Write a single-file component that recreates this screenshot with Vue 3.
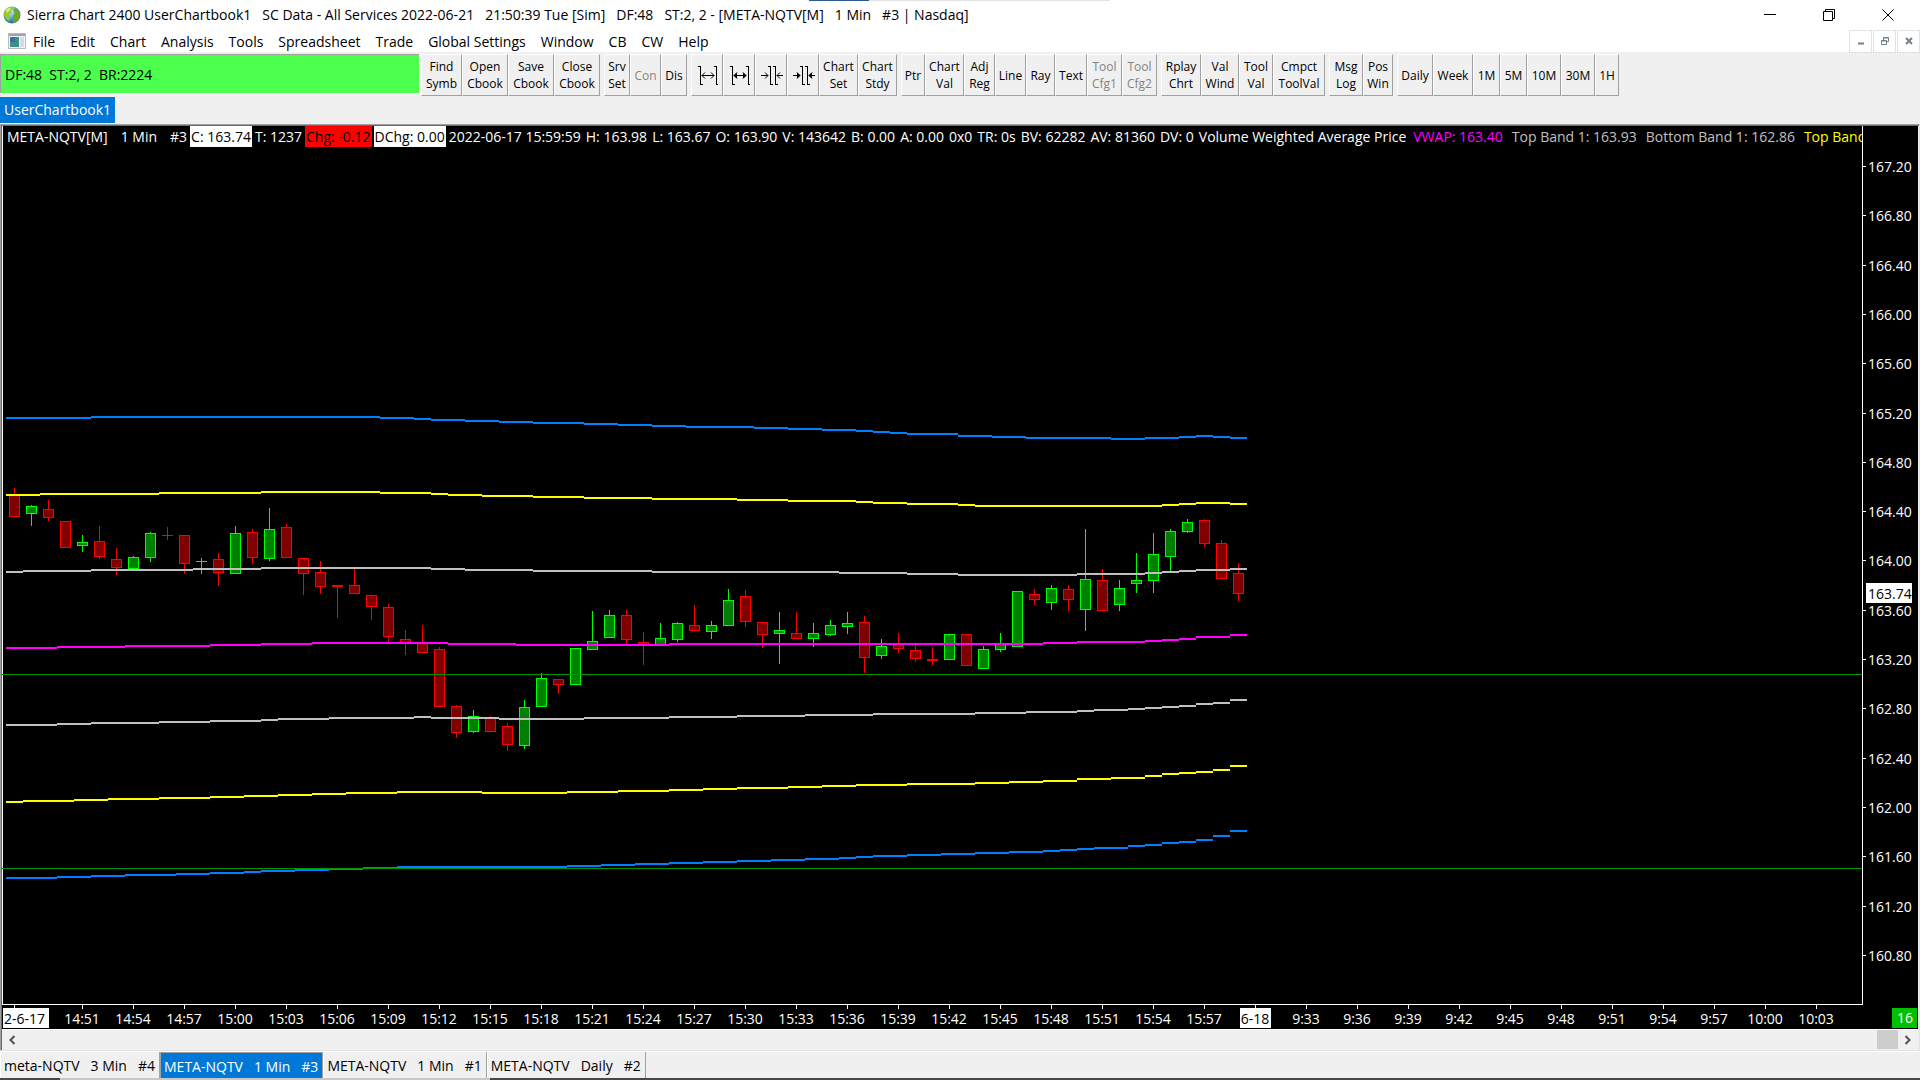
<template>
  <div class="app-window">
    <header class="title-bar">
      <svg class="app-icon" width="18" height="18" viewBox="0 0 18 18">
        <defs>
          <radialGradient id="globe" cx="0.4" cy="0.3" r="0.8">
            <stop offset="0" stop-color="#d8f4ff" />
            <stop offset="0.5" stop-color="#4fa3d8" />
            <stop offset="1" stop-color="#1b4f8c" />
          </radialGradient>
        </defs>
        <circle cx="9" cy="9" r="8.5" fill="url(#globe)" />
        <path d="M2 4 Q5 0.5 9 0.8 L10 3 L8 5 L9 7 L6 9 L7 12 L6 15 Q1 12 0.8 8 Z" fill="#9bc92e" />
        <path d="M11 2 L15 4 Q18 8 16.5 12 Q14 16.5 10 17.2 L11 13 L9.5 10 L12 7 L10.5 5 Z" fill="#6fa820" />
        <path d="M3 4 Q5 1.8 8 1.8 L7 4 L4 7 Z" fill="#e3ee6a" />
      </svg>
      <h1>
        <span v-for="part in windowTitle" :key="part">{{ part }}</span>
      </h1>
      <div class="window-buttons">
        <button aria-label="Minimize">
          <svg width="12" height="12"><path d="M0 5.5H12" /></svg>
        </button>
        <button aria-label="Restore">
          <svg width="12" height="12"><path d="M0.5 2.5H9.5V11.5H0.5Z M2.5 2.5V0.5H11.5V9.5H9.5" /></svg>
        </button>
        <button aria-label="Close">
          <svg width="12" height="12"><path d="M0.5 0.5L11.5 11.5M11.5 0.5L0.5 11.5" /></svg>
        </button>
      </div>
    </header>

    <nav class="menu-bar">
      <svg class="doc-icon" width="18" height="16" viewBox="0 0 18 16">
        <rect x="0.5" y="0.5" width="17" height="15" fill="#f4f4f4" stroke="#b8bcc0" />
        <rect x="1" y="1" width="16" height="2" fill="#9aa4ae" />
        <rect x="2" y="4" width="9" height="10" fill="#3f8f86" />
        <rect x="2" y="4" width="5" height="5" fill="#3c6fa0" />
        <rect x="12" y="4" width="4" height="10" fill="#d4dade" />
      </svg>
      <button v-for="item in menuItems" :key="item" class="menu-item">{{ item }}</button>
      <div class="mdi-buttons">
        <button aria-label="Minimize chart">
          <svg width="10" height="10"><path d="M2 7.5H8" stroke-width="2" /></svg>
        </button>
        <button aria-label="Restore chart">
          <svg width="10" height="10"><path d="M1.5 4.5H6.5V8.5H1.5Z M1 5H7 M3.5 4V1.5H8.5V5.5H7 M3 2H9" /></svg>
        </button>
        <button aria-label="Close chart">
          <svg width="10" height="10"><path d="M2 2L8 8M8 2L2 8" stroke-width="2" /></svg>
        </button>
      </div>
    </nav>

    <div class="toolbar">
      <div class="status">DF:48&nbsp; ST:2, 2&nbsp; BR:2224</div>
      <div v-for="(group, g) in toolGroups" :key="g" class="tool-group">
        <button
          v-for="tool in group"
          :key="tool.label"
          class="tool"
          :disabled="tool.off"
          :aria-label="tool.label"
          :style="{ width: tool.w + 'px' }"
        >
          <svg v-if="tool.icon" width="20" height="20" viewBox="-2 -1 20 20">
            <path :d="tool.icon" />
            <path :d="tool.heads" :class="{ solid: tool.solid }" />
          </svg>
          <template v-else>{{ tool.label }}</template>
        </button>
      </div>
    </div>

    <div class="book-tabs">
      <button class="book-tab">UserChartbook1</button>
    </div>

    <main class="chart-frame">
      <div class="plot">
        <svg class="canvas" shape-rendering="crispEdges">
          <rect width="1" height="100%" fill="#fff" />
          <g transform="translate(-2 274)">
            <g v-for="(c, i) in candles" :key="i" :class="c[4] ? 'up' : 'down'">
              <rect class="wick" :x="barX(i)" :y="c[0]" width="1" :height="c[3] - c[0]" />
              <rect class="edge" :x="barX(i) - 5" :y="c[1]" width="11" :height="c[2] - c[1]" />
              <rect
                v-if="c[2] - c[1] > 2"
                class="body"
                :x="barX(i) - 4"
                :y="c[1] + 1"
                width="9"
                :height="c[2] - c[1] - 2"
              />
            </g>
            <path
              v-for="band in bands"
              :key="band.name"
              :d="bandPath(band.steps)"
              :stroke="band.color"
              stroke-width="2"
              fill="none"
            />
            <rect v-for="y in [274, 468]" :key="y" x="2" :y="y" width="100%" height="1" fill="#009600" />
          </g>
        </svg>
        <div class="readout">
          <div class="fields name">
            <span v-for="text in chartName" :key="text">{{ text }}</span>
          </div>
          <span class="box">C: 163.74</span>
          <span class="plain">T: 1237</span>
          <span class="box loss">Chg: -0.12</span>
          <span class="box">DChg: 0.00</span>
          <div class="fields">
            <span v-for="text in barFields" :key="text">{{ text }}</span>
          </div>
          <span v-for="study in studies" :key="study.text" class="study" :class="study.kind">{{ study.text }}</span>
        </div>
      </div>

      <svg class="price-axis">
        <g v-for="p in prices" :key="p.label">
          <rect x="0" :y="p.y" width="3" height="1" fill="#fff" />
          <text x="5" :y="p.y + 6">{{ p.label }}</text>
        </g>
        <rect x="3" y="457" width="46" height="20" fill="#fff" />
        <text class="dark" x="5" y="473">163.74</text>
      </svg>

      <div class="time-row">
        <svg class="time-axis">
          <g transform="translate(-2 0)">
            <rect x="14" y="0" width="1" height="4" fill="#fff" />
            <rect x="3" y="3" width="46" height="20" fill="#fff" />
            <text class="dark" x="4" y="19">2-6-17</text>
            <g v-for="(t, i) in times" :key="t">
              <rect :x="82 + i * 51" y="0" width="1" height="4" fill="#fff" />
              <rect v-if="t === '6-18'" :x="67 + i * 51" y="3" width="31" height="20" fill="#fff" />
              <text class="mid" :class="{ dark: t === '6-18' }" :x="82 + i * 51" y="19">{{ t }}</text>
            </g>
          </g>
        </svg>
        <span class="countdown">16</span>
      </div>

      <div class="scrollbar">
        <button aria-label="Scroll left">
          <svg width="8" height="10"><path d="M6.5 1L2.5 5L6.5 9" /></svg>
        </button>
        <div class="track"><div class="thumb"></div></div>
        <button aria-label="Scroll right">
          <svg width="8" height="10"><path d="M1.5 1L5.5 5L1.5 9" /></svg>
        </button>
      </div>
    </main>

    <footer class="chart-tabs">
      <button v-for="(tab, i) in chartTabs" :key="i" :class="{ active: i === activeTab }" @click="activeTab = i">
        <span v-for="part in tab" :key="part">{{ part }}</span>
      </button>
    </footer>
    <div class="window-edge"></div>
  </div>
</template>

<script setup>
import { ref } from 'vue'

const windowTitle = [
  'Sierra Chart 2400 UserChartbook1',
  'SC Data - All Services 2022-06-21',
  '21:50:39 Tue [Sim]',
  'DF:48',
  'ST:2, 2 - [META-NQTV[M]',
  '1 Min',
  '#3 | Nasdaq]',
]

const menuItems = [
  'File', 'Edit', 'Chart', 'Analysis', 'Tools', 'Spreadsheet', 'Trade',
  'Global Settings', 'Window', 'CB', 'CW', 'Help',
]

const outerBars = 'M1.5 0V19M-1 0.5H1M1 18.5H4M17.5 0V19M15 0.5H17M17 18.5H19'
const innerBars = 'M7.5 0V19M5 0.5H7M7 18.5H10M12.5 0V19M10 0.5H12M12 18.5H15'
const headsOut = 'M3 9.5H15M6 6.5L3 9.5L6 12.5M12 6.5L15 9.5L12 12.5'
const headsIn = 'M-2 9.5H5M2 6.5L5 9.5L2 12.5M20 9.5H14M17 6.5L14 9.5L17 12.5'

const toolGroups = [
  [
    { label: 'Find Symb', w: 41 },
    { label: 'Open Cbook', w: 46 },
    { label: 'Save Cbook', w: 46 },
    { label: 'Close Cbook', w: 46 },
  ],
  [
    { label: 'Srv Set', w: 26 },
    { label: 'Con', w: 31, off: true },
    { label: 'Dis', w: 26 },
  ],
  [
    { label: 'Increase spacing', w: 32, icon: outerBars, heads: headsOut },
    { label: 'Increase spacing more', w: 32, icon: outerBars, heads: headsOut, solid: true },
    { label: 'Decrease spacing', w: 32, icon: innerBars, heads: headsIn },
    { label: 'Decrease spacing more', w: 32, icon: innerBars, heads: headsIn, solid: true },
    { label: 'Chart Set', w: 39 },
    { label: 'Chart Stdy', w: 39 },
  ],
  [
    { label: 'Ptr', w: 24 },
    { label: 'Chart Val', w: 39 },
    { label: 'Adj Reg', w: 31 },
    { label: 'Line', w: 31 },
    { label: 'Ray', w: 29 },
    { label: 'Text', w: 32 },
    { label: 'Tool Cfg1', w: 35, off: true },
    { label: 'Tool Cfg2', w: 35, off: true },
  ],
  [
    { label: 'Rplay Chrt', w: 40 },
    { label: 'Val Wind', w: 38 },
    { label: 'Tool Val', w: 34 },
    { label: 'Cmpct ToolVal', w: 52 },
  ],
  [
    { label: 'Msg Log', w: 34 },
    { label: 'Pos Win', w: 30 },
  ],
  [
    { label: 'Daily', w: 36 },
    { label: 'Week', w: 40 },
    { label: '1M', w: 27 },
    { label: '5M', w: 27 },
    { label: '10M', w: 34 },
    { label: '30M', w: 34 },
    { label: '1H', w: 24 },
  ],
]

const chartName = ['META-NQTV[M]', '1 Min', '#3']
const barFields = [
  '2022-06-17 15:59:59', 'H: 163.98', 'L: 163.67', 'O: 163.90', 'V: 143642', 'B: 0.00', 'A: 0.00', '0x0',
  'TR: 0s', 'BV: 62282', 'AV: 81360', 'DV: 0', 'Volume Weighted Average Price',
]
const studies = [
  { text: 'VWAP: 163.40', kind: 'vwap' },
  { text: 'Top Band 1: 163.93', kind: 'band1' },
  { text: 'Bottom Band 1: 162.86', kind: 'band1' },
  { text: 'Top Band', kind: 'band2' },
]

// [high, body top, body bottom, low, up]
const candles = [
  [88, 95, 117, 117, 0], [105, 106, 114, 126, 1], [100, 109, 118, 121, 0], [121, 121, 148, 148, 0],
  [135, 142, 146, 152, 1], [126, 141, 157, 159, 0], [148, 159, 168, 175, 0], [156, 157, 169, 169, 1],
  [132, 133, 158, 162, 1], [127, 135, 136, 140, 0], [135, 135, 164, 174, 0], [158, 161, 162, 174, 1],
  [153, 159, 173, 186, 0], [126, 133, 174, 174, 1], [129, 132, 158, 163, 0], [108, 129, 159, 161, 1],
  [124, 127, 158, 158, 0], [158, 158, 174, 195, 0], [161, 172, 187, 194, 0], [185, 185, 187, 218, 0],
  [169, 185, 194, 194, 0], [195, 195, 207, 220, 0], [204, 207, 237, 242, 0], [230, 239, 243, 255, 0],
  [225, 243, 253, 253, 0], [247, 249, 307, 307, 0], [305, 306, 333, 338, 0], [310, 316, 332, 333, 1],
  [316, 318, 332, 332, 0], [323, 326, 345, 351, 0], [300, 307, 346, 349, 1], [273, 278, 307, 307, 1],
  [279, 279, 285, 294, 0], [248, 248, 285, 285, 1], [211, 241, 250, 250, 1], [210, 215, 238, 238, 1],
  [210, 215, 240, 244, 0], [232, 242, 245, 265, 0], [223, 238, 245, 245, 1], [222, 223, 240, 242, 1],
  [205, 225, 231, 231, 0], [221, 225, 232, 239, 1], [189, 200, 226, 226, 1], [190, 196, 222, 227, 0],
  [222, 222, 235, 248, 0], [212, 230, 234, 264, 1], [212, 233, 239, 239, 0], [223, 233, 239, 247, 1],
  [220, 225, 235, 236, 1], [212, 223, 227, 234, 1], [216, 222, 258, 273, 0], [239, 246, 256, 259, 1],
  [233, 244, 249, 253, 0], [244, 250, 259, 262, 0], [247, 259, 261, 265, 0], [234, 234, 260, 260, 1],
  [234, 234, 266, 266, 0], [246, 249, 269, 269, 1], [233, 244, 250, 252, 1], [191, 191, 247, 247, 1],
  [189, 194, 200, 205, 0], [185, 188, 203, 210, 1], [185, 189, 200, 211, 0], [129, 179, 210, 231, 1],
  [169, 180, 211, 211, 0], [180, 188, 205, 211, 1], [153, 180, 184, 193, 1], [133, 154, 181, 193, 1],
  [129, 131, 157, 172, 1], [119, 122, 132, 133, 1], [119, 120, 144, 147, 0], [140, 143, 179, 179, 0],
  [163, 173, 194, 201, 0],
]

// steps: [first bar, y]
const bands = [
  {
    name: 'top3',
    color: '#0080ff',
    steps: [
      [0, 18], [5, 17], [22, 18], [24, 19], [25, 20], [27, 21], [29, 22], [31, 23], [34, 24], [36, 25],
      [38, 26], [40, 27], [44, 28], [46, 29], [48, 30], [50, 31], [51, 32], [52, 33], [53, 34], [56, 36],
      [58, 37], [60, 38], [65, 39], [67, 38], [69, 37], [70, 36], [71, 37], [72, 38],
    ],
  },
  {
    name: 'top2',
    color: '#ffff00',
    steps: [
      [0, 95], [2, 94], [9, 93], [15, 92], [22, 93], [25, 94], [26, 95], [28, 96], [31, 97], [34, 98],
      [38, 99], [43, 100], [46, 101], [50, 102], [51, 103], [53, 104], [56, 105], [57, 106], [68, 105],
      [69, 104], [70, 103], [72, 104],
    ],
  },
  {
    name: 'top1',
    color: '#c0c0c0',
    steps: [
      [0, 172], [1, 171], [5, 170], [11, 169], [15, 168], [25, 169], [27, 170], [31, 171], [38, 172],
      [49, 173], [53, 174], [56, 175], [63, 174], [67, 173], [68, 172], [69, 171], [70, 170], [72, 169],
    ],
  },
  {
    name: 'bottom1',
    color: '#c0c0c0',
    steps: [
      [0, 325], [3, 324], [5, 323], [9, 322], [12, 321], [15, 320], [16, 319], [19, 318], [24, 317],
      [25, 318], [29, 319], [34, 318], [39, 317], [43, 316], [47, 315], [51, 314], [57, 313], [60, 312],
      [63, 311], [64, 310], [66, 309], [67, 308], [68, 307], [69, 306], [70, 304], [71, 303], [72, 300],
    ],
  },
  {
    name: 'bottom2',
    color: '#ffff00',
    steps: [
      [0, 402], [1, 401], [4, 400], [6, 399], [9, 398], [12, 397], [14, 396], [16, 395], [18, 394],
      [20, 393], [23, 392], [28, 393], [33, 392], [36, 391], [39, 390], [41, 389], [43, 388], [46, 387],
      [48, 386], [50, 385], [53, 384], [57, 383], [59, 382], [61, 381], [63, 379], [65, 378], [67, 376],
      [68, 374], [69, 373], [70, 372], [71, 370], [72, 366],
    ],
  },
  {
    name: 'bottom3',
    color: '#0080ff',
    steps: [
      [0, 478], [3, 477], [5, 476], [7, 475], [10, 474], [12, 473], [14, 472], [15, 471], [17, 470],
      [19, 469], [21, 468], [23, 467], [33, 466], [35, 465], [37, 464], [39, 463], [41, 462], [43, 461],
      [45, 460], [47, 459], [49, 458], [50, 457], [51, 456], [53, 455], [55, 454], [57, 453], [59, 452],
      [61, 451], [62, 450], [63, 449], [64, 448], [66, 446], [67, 445], [68, 443], [69, 442], [70, 440],
      [71, 436], [72, 431],
    ],
  },
  {
    name: 'vwap',
    color: '#ff00ff',
    steps: [
      [0, 248], [3, 247], [7, 246], [12, 245], [15, 244], [18, 243], [26, 244], [30, 245], [39, 244],
      [61, 243], [63, 242], [67, 241], [68, 240], [69, 239], [70, 237], [72, 235],
    ],
  },
]

const barWidth = 17
const barX = (i) => 14 + i * barWidth

function bandPath(steps) {
  return steps
    .map(([start, y], i) => {
      const end = i + 1 < steps.length ? steps[i + 1][0] : candles.length
      return `M${6 + start * barWidth} ${y}H${6 + end * barWidth}`
    })
    .join('')
}

const prices = Array.from({ length: 17 }, (_, i) => ({
  label: (167.2 - i * 0.4).toFixed(2),
  y: Math.round(40 + i * 49.3),
}))

const clock = (minutes) => `${Math.floor(minutes / 60)}:${String(minutes % 60).padStart(2, '0')}`
const times = [
  ...Array.from({ length: 23 }, (_, i) => clock(14 * 60 + 51 + i * 3)),
  '6-18',
  ...Array.from({ length: 11 }, (_, i) => clock(9 * 60 + 33 + i * 3)),
]

const chartTabs = [
  ['meta-NQTV', '3 Min', '#4'],
  ['META-NQTV', '1 Min', '#3'],
  ['META-NQTV', '1 Min', '#1'],
  ['META-NQTV', 'Daily', '#2'],
]
const activeTab = ref(1)
</script>

<style>
body {
  background: #f0f0f0;
}
</style>

<style scoped>
* {
  box-sizing: border-box;
}

.app-window {
  display: flex;
  flex-direction: column;
  height: 100vh;
  overflow: hidden;
  background: #f0f0f0;
  color: #000;
  font-family: 'Open Sans', 'Noto Sans', sans-serif;
  font-size: 14px;
  line-height: 20px;
}

button {
  margin: 0;
  padding: 0;
  border: 0;
  background: none;
  color: inherit;
  font: inherit;
  white-space: pre;
}

.title-bar {
  position: relative;
  display: flex;
  align-items: center;
  height: 30px;
  padding: 0 3px;
  gap: 6px;
  background: #fff;
}

/* sliver of the window behind */
.title-bar::before {
  content: '';
  position: absolute;
  top: 0;
  left: 809px;
  width: 301px;
  height: 1px;
  background: linear-gradient(90deg, #2b5a8c 60px, #e3e3e3 60px);
}

.title-bar h1 {
  display: flex;
  flex: 1;
  gap: 11px;
  margin: 0;
  font-size: 14px;
  font-weight: 400;
  white-space: pre;
}

.window-buttons {
  display: flex;
}

.window-buttons button {
  display: grid;
  place-items: center;
  width: 59px;
  height: 28px;
}

.window-buttons svg {
  fill: none;
  stroke: #000;
}

.menu-bar {
  display: flex;
  align-items: center;
  height: 22px;
  padding-left: 8px;
  gap: 15px;
  background: #fff;
}

.menu-item {
  padding-top: 1px;
}

.doc-icon {
  margin-right: -8px;
}

.mdi-buttons {
  display: flex;
  gap: 1px;
  margin-left: auto;
}

.mdi-buttons button {
  display: grid;
  place-items: center;
  width: 23px;
  height: 23px;
  border: 1px solid #e2e2e2;
}

.mdi-buttons svg {
  fill: none;
  stroke: #74808e;
}

.toolbar {
  display: flex;
  gap: 4px;
  height: 45px;
  padding-top: 2px;
}

.status {
  width: 419px;
  height: 39px;
  margin-right: -2px;
  padding-left: 4px;
  border-top: 1px solid #a0a0a0;
  border-left: 1px solid #a0a0a0;
  background: #4dff4d;
  line-height: 40px;
}

.tool-group {
  display: flex;
  height: 42px;
}

.tool {
  display: grid;
  place-items: center;
  align-content: center;
  border: 1px solid #a0a0a0;
  border-top-color: #fff;
  border-left-color: #fff;
  font-size: 12px;
  line-height: 17px;
  text-align: center;
  white-space: normal;
}

.tool:disabled {
  color: #838383;
}

.tool svg {
  overflow: visible;
  fill: none;
  stroke: #000;
}

.tool .solid {
  fill: #000;
}

.book-tabs {
  height: 27px;
}

.book-tab {
  height: 26px;
  padding: 0 4px;
  background: #0078d7;
  color: #fff;
}

.chart-frame {
  display: grid;
  flex: 1;
  grid-template-columns: 1fr 55px;
  grid-template-rows: 1fr 24px 21px;
  min-height: 0;
  border: 1px solid #a0a0a0;
  border-right-color: #e3e3e3;
  border-bottom-color: #e3e3e3;
  box-shadow: inset 1px 1px #696969;
  padding: 1px 1px 0 1px;
}

.plot {
  position: relative;
  min-width: 0;
  overflow: hidden;
  border-right: 1px solid #fff;
  border-bottom: 1px solid #fff;
  background: #000;
}

.canvas {
  display: block;
  width: 100%;
  height: 100%;
}

.up .wick,
.up .edge {
  fill: #00ff00;
}

.up .body {
  fill: #008000;
}

.down .wick,
.down .edge {
  fill: #ff0000;
}

.down .body {
  fill: #800000;
}

.readout {
  position: absolute;
  top: 0;
  left: 4px;
  display: flex;
  color: #fff;
  line-height: 21px;
  white-space: pre;
}

.fields {
  display: flex;
  gap: 5px;
  padding: 0 3px 0 1px;
}

.name {
  gap: 13px;
}

.plain {
  padding: 0 3px 0 1px;
}

.box {
  margin-right: 2px;
  padding: 0 1px;
  background: #fff;
  color: #000;
}

.loss {
  background: #ff0000;
}

.study {
  margin-left: 4px;
  padding-right: 5px;
}

.vwap {
  color: #ff00ff;
}

.band1 {
  color: #c0c0c0;
}

.band2 {
  color: #ffff00;
}

.price-axis {
  width: 100%;
  height: 100%;
  background: #000;
}

text {
  fill: #fff;
}

text.dark {
  fill: #000;
}

.mid {
  text-anchor: middle;
}

.time-row {
  display: flex;
  grid-column: 1 / -1;
  align-items: center;
  background: #000;
}

.time-axis {
  flex: 1;
  min-width: 0;
  height: 24px;
}

.countdown {
  width: 25px;
  margin: 2px 1px 0 0;
  padding-left: 5px;
  background: #00c000;
  color: #fff;
}

.scrollbar {
  display: flex;
  grid-column: 1 / -1;
  padding-bottom: 1px;
  border-top: 1px solid #fff;
}

.scrollbar button {
  display: grid;
  place-items: center;
  width: 20px;
}

.scrollbar svg {
  fill: none;
  stroke: #505050;
  stroke-width: 2;
}

.track {
  display: flex;
  flex: 1;
  justify-content: flex-end;
}

.thumb {
  width: 21px;
  background: #cdcdcd;
}

.chart-tabs {
  display: flex;
  height: 27px;
  border-top: 1px solid #fff;
}

.chart-tabs button {
  display: flex;
  align-items: center;
  gap: 11px;
  padding: 2px 4px 0 3px;
  border-right: 1px solid #a0a0a0;
  border-left: 1px solid #fff;
}

.chart-tabs .active {
  border-top: 1px solid #a0a0a0;
  border-left-color: #a0a0a0;
  background: #0078d7;
  color: #fff;
}

.window-edge {
  height: 2px;
  background: linear-gradient(90deg, #484848 60px, #c8c8c8 60px 490px, #484848 490px);
}
</style>
